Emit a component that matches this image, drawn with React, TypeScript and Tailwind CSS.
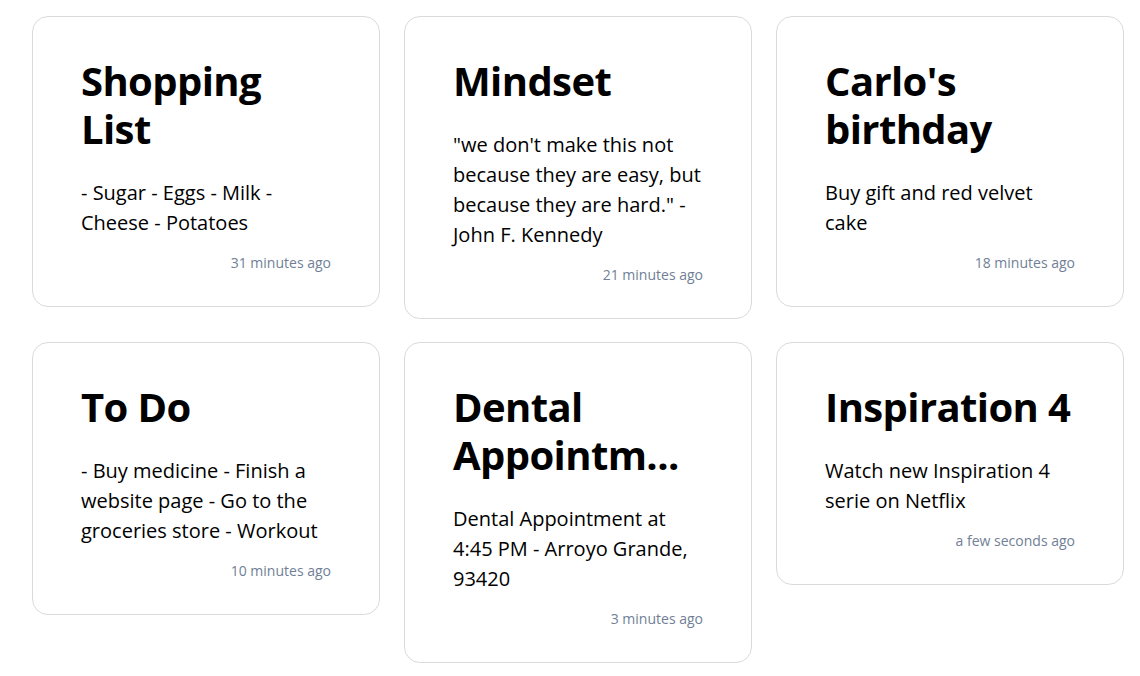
import React from "react";

type Note = { title: string; body: string; time: string };

const notes: Note[] = [
  { title: "Shopping List", body: "- Sugar - Eggs - Milk - Cheese - Potatoes", time: "31 minutes ago" },
  {
    title: "Mindset",
    body: "\"we don't make this not because they are easy, but because they are hard.\" - John F. Kennedy",
    time: "21 minutes ago",
  },
  { title: "Carlo's birthday", body: "Buy gift and red velvet cake", time: "18 minutes ago" },
  {
    title: "To Do",
    body: "- Buy medicine - Finish a website page - Go to the groceries store - Workout",
    time: "10 minutes ago",
  },
  {
    title: "Dental Appointment",
    body: "Dental Appointment at 4:45 PM - Arroyo Grande, 93420",
    time: "3 minutes ago",
  },
  { title: "Inspiration 4", body: "Watch new Inspiration 4 serie on Netflix", time: "a few seconds ago" },
];

function truncate(t: string) {
  return t.length > 16 ? t.substring(0, 15) + "..." : t;
}

function Card({ note }: { note: Note }) {
  return (
    <div className="rounded-2xl border border-[#dadada] bg-white px-12 pt-10 pb-[33px]">
      <h2 className="text-[40px] font-bold leading-[48px] tracking-[-0.6px] text-black">{truncate(note.title)}</h2>
      <p className="mt-[25px] text-[20px] leading-[30px] text-black">{note.body}</p>
      <p className="mt-[15px] text-right text-[14px] leading-[20px] text-[#718096]">{note.time}</p>
    </div>
  );
}

export default function App() {
  return (
    <div
      className="min-h-[676px] bg-white pl-8 pr-4 pt-4 pb-4"
      style={{ fontFamily: "'Open Sans', sans-serif" }}
    >
      <div className="grid grid-cols-3 items-start gap-x-6 gap-y-[23px]">
        {notes.map((n) => (
          <Card key={n.title} note={n} />
        ))}
      </div>
    </div>
  );
}
